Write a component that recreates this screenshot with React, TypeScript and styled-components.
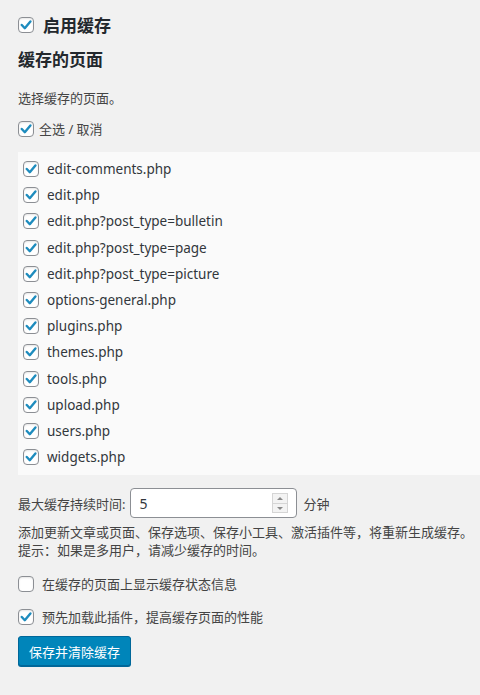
import React, { useState } from 'react';
import styled, { createGlobalStyle } from 'styled-components';

const GlobalStyle = createGlobalStyle`
  html, body {
    margin: 0;
    padding: 0;
    background: #f1f1f1;
  }
  body {
    font-family: "Noto Sans", "Noto Sans CJK SC", sans-serif;
    font-size: 13px;
    color: #444;
  }
`;

const pages = [
  'edit-comments.php',
  'edit.php',
  'edit.php?post_type=bulletin',
  'edit.php?post_type=page',
  'edit.php?post_type=picture',
  'options-general.php',
  'plugins.php',
  'themes.php',
  'tools.php',
  'upload.php',
  'users.php',
  'widgets.php',
];

const Page = styled.div`
  padding: 12px 0 24px 18px;
  min-height: 695px;
  box-sizing: border-box;
`;

const BoxLabel = styled.label<{ $gap?: number }>`
  display: flex;
  align-items: center;
  gap: ${p => p.$gap ?? 8}px;
  cursor: pointer;
`;

const Box = styled.span<{ $checked: boolean }>`
  width: 16px;
  height: 16px;
  flex: none;
  box-sizing: border-box;
  border: 1px solid #8c8f94;
  border-radius: 4px;
  background: #fff;
  box-shadow: inset 0 1px 2px rgba(0, 0, 0, 0.1);
  display: flex;
  align-items: center;
  justify-content: center;
  svg {
    display: ${p => (p.$checked ? 'block' : 'none')};
  }
`;

const Check: React.FC<{ checked: boolean; onToggle: () => void }> = ({ checked, onToggle }) => (
  <Box $checked={checked} onClick={onToggle}>
    <svg width="12" height="12" viewBox="0 0 12 12">
      <path d="M1.8 6 L4.8 9.2 L10.4 2.4" fill="none" stroke="#1e8cbe" strokeWidth="2.4" strokeLinecap="round" strokeLinejoin="round" />
    </svg>
  </Box>
);

const EnableTitle = styled.span`
  font-size: 17px;
  font-weight: 700;
  color: #23282d;
`;

const SectionTitle = styled.h2`
  margin: 11px 0 0;
  font-size: 17px;
  font-weight: 700;
  color: #23282d;
  line-height: 24px;
`;

const Hint = styled.p`
  margin: 16px 0 0;
  line-height: 20px;
`;

const AllRow = styled.div`
  margin-top: 11px;
  span.text {
    line-height: 20px;
  }
`;

const PageList = styled.div`
  margin-top: 13px;
  background: #fafafa;
  padding: 4px 0 5px 5px;
  display: flex;
  flex-direction: column;
`;

const PageItem = styled.div`
  height: 26.2px;
  display: flex;
  align-items: center;
  font-size: 13.5px;
  color: #32373c;
`;

const DurationRow = styled.div`
  margin-top: 13px;
  display: flex;
  align-items: center;
`;

const NumberField = styled.div`
  width: 167px;
  height: 30px;
  margin: 0 6px 0 5px;
  box-sizing: border-box;
  border: 1px solid #8c8f94;
  border-radius: 4px;
  background: #fff;
  display: flex;
  align-items: center;
  padding: 0 8px 0 8px;
  font-size: 14px;
  color: #32373c;
`;

const FieldValue = styled.span`
  flex: 1;
`;

const Spinner = styled.div`
  width: 16px;
  height: 20px;
  border: 1px solid #d5d5d5;
  display: flex;
  flex-direction: column;
  box-sizing: border-box;
`;

const SpinBtn = styled.div<{ $up?: boolean }>`
  flex: 1;
  display: flex;
  align-items: center;
  justify-content: center;
  background: #f3f3f3;
  border-top: ${p => (p.$up ? 'none' : '1px solid #d5d5d5')};
  &::after {
    content: '';
    border-left: 3px solid transparent;
    border-right: 3px solid transparent;
    ${p => (p.$up ? 'border-bottom: 3px solid #888;' : 'border-top: 3px solid #888;')}
  }
`;

const Note = styled.p`
  margin: 5px 0 0;
  line-height: 18px;
`;

const OptionRow = styled.div<{ $top: number }>`
  margin-top: ${p => p.$top}px;
  line-height: 20px;
`;

const SaveButton = styled.button`
  margin-top: 9px;
  height: 30px;
  padding: 0 10px;
  border: 1px solid #006799;
  border-radius: 3px;
  background: #0085ba;
  color: #fff;
  font-family: "Noto Sans", "Noto Sans CJK SC", sans-serif;
  font-size: 13px;
  cursor: pointer;
  box-shadow: 0 1px 0 #006799;
`;

const App: React.FC = () => {
  const [enabled, setEnabled] = useState(true);
  const [selected, setSelected] = useState<string[]>(pages);
  const [showStatus, setShowStatus] = useState(false);
  const [preload, setPreload] = useState(true);

  const allSelected = selected.length === pages.length;

  const toggle = (name: string) => {
    setSelected(selected.includes(name) ? selected.filter(s => s !== name) : [...selected, name]);
  };

  return (
    <>
      <GlobalStyle />
      <Page>
        <BoxLabel $gap={9}>
          <Check checked={enabled} onToggle={() => setEnabled(!enabled)} />
          <EnableTitle>启用缓存</EnableTitle>
        </BoxLabel>
        <SectionTitle>缓存的页面</SectionTitle>
        <Hint>选择缓存的页面。</Hint>
        <AllRow>
          <BoxLabel $gap={5}>
            <Check checked={allSelected} onToggle={() => setSelected(allSelected ? [] : pages)} />
            <span className="text">全选 / 取消</span>
          </BoxLabel>
        </AllRow>
        <PageList>
          {pages.map(name => (
            <PageItem key={name}>
              <BoxLabel>
                <Check checked={selected.includes(name)} onToggle={() => toggle(name)} />
                <span>{name}</span>
              </BoxLabel>
            </PageItem>
          ))}
        </PageList>
        <DurationRow>
          <span>最大缓存持续时间:</span>
          <NumberField>
            <FieldValue>5</FieldValue>
            <Spinner>
              <SpinBtn $up />
              <SpinBtn />
            </Spinner>
          </NumberField>
          <span>分钟</span>
        </DurationRow>
        <Note>
          添加更新文章或页面、保存选项、保存小工具、激活插件等，将重新生成缓存。
          <br />
          提示：如果是多用户，请减少缓存的时间。
        </Note>
        <OptionRow $top={15}>
          <BoxLabel>
            <Check checked={showStatus} onToggle={() => setShowStatus(!showStatus)} />
            <span>在缓存的页面上显示缓存状态信息</span>
          </BoxLabel>
        </OptionRow>
        <OptionRow $top={13}>
          <BoxLabel>
            <Check checked={preload} onToggle={() => setPreload(!preload)} />
            <span>预先加载此插件，提高缓存页面的性能</span>
          </BoxLabel>
        </OptionRow>
        <SaveButton>保存并清除缓存</SaveButton>
      </Page>
    </>
  );
};

export default App;
